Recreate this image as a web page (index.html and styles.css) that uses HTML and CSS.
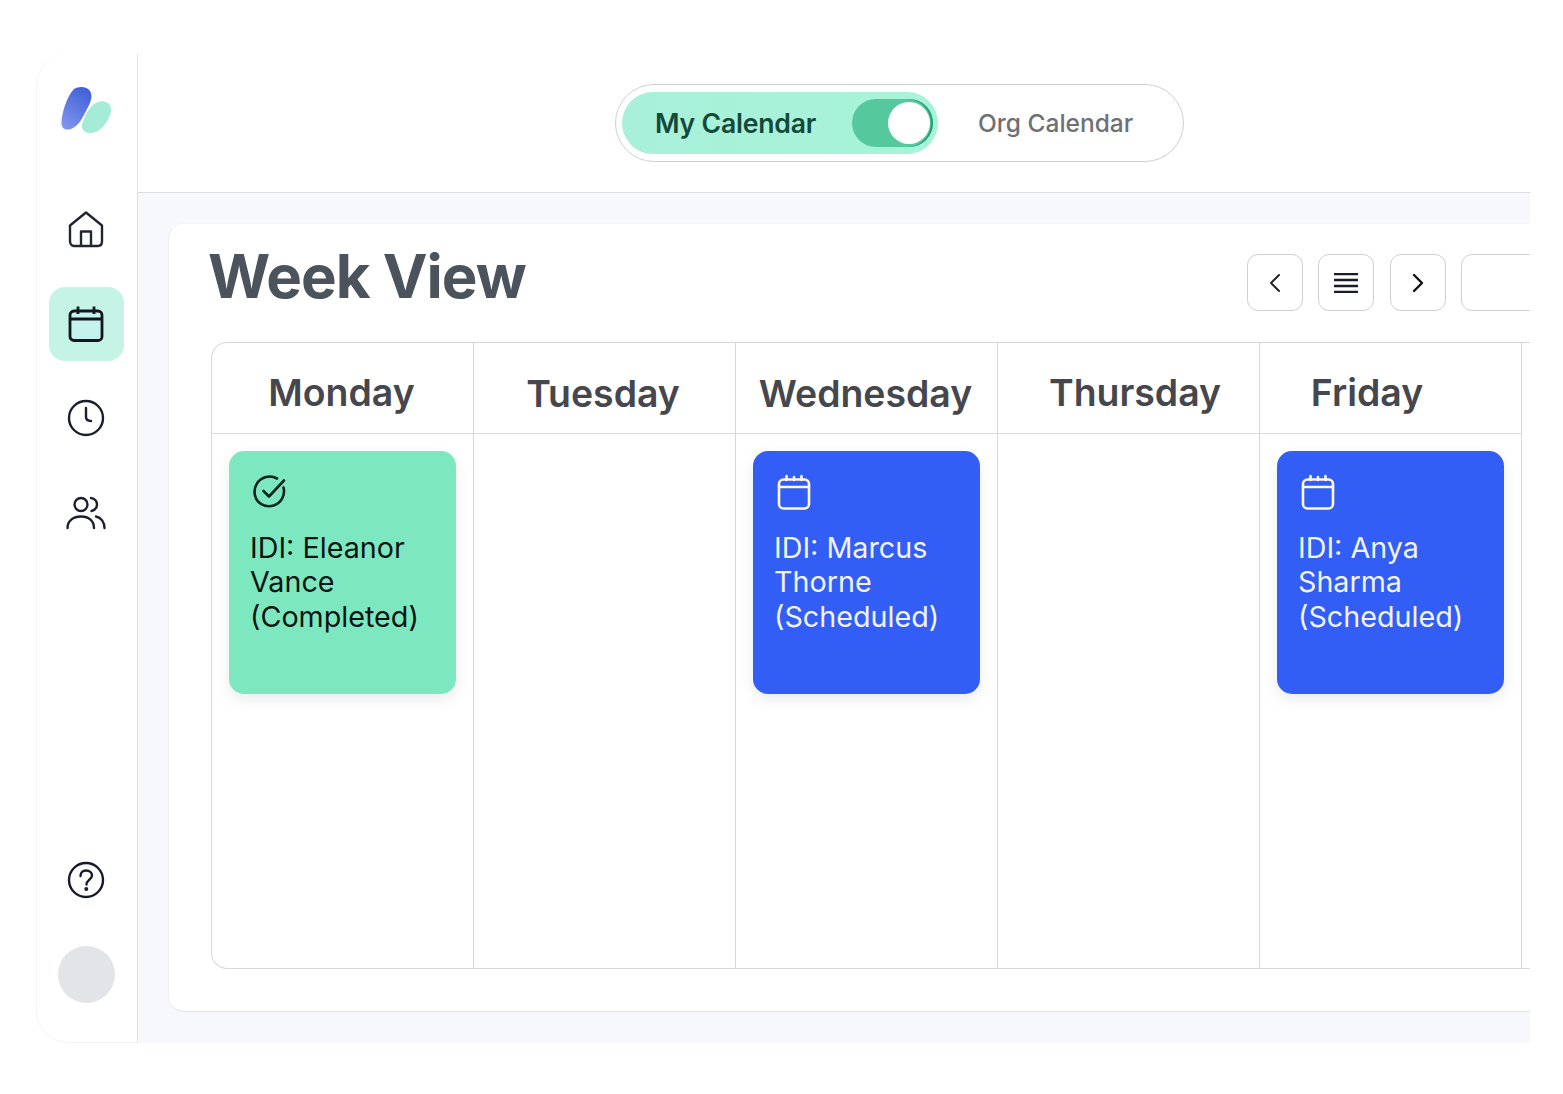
FILE: index.html
```html
<!DOCTYPE html>
<html>
<head>
    <link rel="stylesheet" href="styles.css">
</head>
<body>
<div class="app">
    <div class="sidebar">
        <svg class="logo" width="52" height="50" viewBox="0 0 52 50">
            <defs>
                <linearGradient id="logo-blue" x1="0.7" y1="0" x2="0.2" y2="1">
                    <stop offset="0" stop-color="#4360d8"/>
                    <stop offset="1" stop-color="#7f95ee"/>
                </linearGradient>
            </defs>
            <path d="M14 3C18 0 27 0 30 5C33 10 31 16 27 23C23 31 19 40 11 43C5 45 1 42 1.500 36C2 26 7 10 14 3Z" fill="url(#logo-blue)"/>
            <path d="M24 33C27 24 33 17 40 15.500C47 14 52 19 51 25C50 32 44 42 36 46C29 49 21 46 22 39Z" fill="#a4ecd6"/>
        </svg>
        <div class="nav-item nav-home">
            <svg width="38" height="38" viewBox="0 0 38 38" fill="none" stroke="#22242f" stroke-width="2.400" stroke-linejoin="round">
                <path d="M3 15.500L19 2.500L35 15.500V31C35 34 33.500 36 31 36H7C4.500 36 3 34 3 31Z"/>
                <path d="M14 36V21.500H24V36"/>
            </svg>
        </div>
        <div class="nav-item nav-active">
            <svg width="36" height="38" viewBox="0 0 36 38" fill="none" stroke="#14161f" stroke-width="2.800" stroke-linejoin="round">
                <rect x="2" y="6" width="32" height="29.500" rx="4" fill="#c3f3ec"/>
                <path d="M2 14H34M10 1.500V9M26 1.500V9"/>
            </svg>
        </div>
        <div class="nav-item nav-clock">
            <svg width="38" height="38" viewBox="0 0 38 38" fill="none" stroke="#1b1e2b" stroke-width="2.400" stroke-linecap="round">
                <circle cx="19" cy="19" r="17"/>
                <path d="M19 9V18C19 20.500 20.500 22 24 22"/>
            </svg>
        </div>
        <div class="nav-item nav-people">
            <svg width="40" height="34" viewBox="0 0 40 34" fill="none" stroke="#1d202c" stroke-width="2.400" stroke-linecap="round">
                <circle cx="15" cy="8.500" r="6.500"/>
                <path d="M1.500 32C1.500 25 7 20.500 15 20.500C23 20.500 28 25 28 32"/>
                <path d="M25 2C29 2.500 31 5.500 31 8.500C31 11.500 29 14 25.500 15"/>
                <path d="M30 20.500C35 21.500 38.500 26 38.500 32"/>
            </svg>
        </div>
        <div class="nav-spacer"></div>
        <div class="nav-item nav-help">
            <svg width="38" height="38" viewBox="0 0 38 38" fill="none" stroke="#15192b" stroke-width="2.400" stroke-linecap="round">
                <circle cx="19" cy="19" r="17"/>
                <path d="M13.500 15C13.500 11.500 16 9.500 19 9.500C22.500 9.500 25 11.500 25 14.500C25 18.500 19.500 19 19.500 23.500"/>
                <circle cx="19.300" cy="28" r="0.800" fill="#15192b"/>
            </svg>
        </div>
        <div class="avatar"></div>
    </div>
    <div class="content">
        <div class="topbar">
            <div class="switcher">
                <div class="switch-active">
                    <span>My Calendar</span>
                    <div class="toggle"><div class="knob"></div></div>
                </div>
                <span class="switch-other">Org Calendar</span>
            </div>
        </div>
        <div class="main-content">
            <div class="panel">
                <div class="panel-head">
                    <h1>Week View</h1>
                    <div class="tools">
                        <div class="tool">
                            <svg width="14" height="20" viewBox="0 0 14 20" fill="none" stroke="#22242c" stroke-width="2" stroke-linecap="round" stroke-linejoin="round"><path d="M11 2L3 10L11 18"/></svg>
                        </div>
                        <div class="tool">
                            <svg width="26" height="20" viewBox="0 0 26 20" fill="none" stroke="#1a1c2c" stroke-width="2.500"><path d="M1 1H25M1 7H25M1 13H25M1 19H25"/></svg>
                        </div>
                        <div class="tool">
                            <svg width="14" height="20" viewBox="0 0 14 20" fill="none" stroke="#111" stroke-width="2.400" stroke-linecap="round" stroke-linejoin="round"><path d="M3 2L11 10L3 18"/></svg>
                        </div>
                        <div class="tool tool-wide"></div>
                    </div>
                </div>
                <div class="week">
                    <div class="day">
                        <div class="day-name">Monday</div>
                        <div class="day-body">
                            <div class="event event-done">
                                <svg width="36" height="36" viewBox="0 0 36 36" fill="none" stroke="#10221d" stroke-width="2.600" stroke-linecap="round" stroke-linejoin="round">
                                    <path d="M31.500 13.500C33.500 21.500 29 29 21.500 31.500C13 34 5 29.500 3 21.500C1 13 6 5 14 3C18 2 21.500 2.500 25 4.500"/>
                                    <path d="M11.500 17L17 22.500L32 6.500"/>
                                </svg>
                                <p>IDI: Eleanor Vance (Completed)</p>
                            </div>
                        </div>
                    </div>
                    <div class="day">
                        <div class="day-name name-tue">Tuesday</div>
                        <div class="day-body"></div>
                    </div>
                    <div class="day">
                        <div class="day-name name-wed">Wednesday</div>
                        <div class="day-body">
                            <div class="event event-scheduled">
                                <svg width="36" height="36" viewBox="0 0 36 36" fill="none" stroke="#fdf6e0" stroke-width="2.600" stroke-linejoin="round" stroke-linecap="round">
                                    <rect x="3" y="5.500" width="30" height="29" rx="4.500"/>
                                    <path d="M3 13H33M10.500 2V6M18 3V6M25.500 2V6"/>
                                </svg>
                                <p>IDI: Marcus Thorne (Scheduled)</p>
                            </div>
                        </div>
                    </div>
                    <div class="day">
                        <div class="day-name name-thu">Thursday</div>
                        <div class="day-body"></div>
                    </div>
                    <div class="day">
                        <div class="day-name name-fri">Friday</div>
                        <div class="day-body">
                            <div class="event event-scheduled">
                                <svg width="36" height="36" viewBox="0 0 36 36" fill="none" stroke="#fdf6e0" stroke-width="2.600" stroke-linejoin="round" stroke-linecap="round">
                                    <rect x="3" y="5.500" width="30" height="29" rx="4.500"/>
                                    <path d="M3 13H33M10.500 2V6M18 3V6M25.500 2V6"/>
                                </svg>
                                <p>IDI: Anya Sharma (Scheduled)</p>
                            </div>
                        </div>
                    </div>
                    <div class="day"></div>
                </div>
            </div>
        </div>
    </div>
</div>
</body>
</html>
```

FILE: styles.css
```css
html, body {
    margin: 0;
    height: 100%;
    overflow: hidden;
}
body {
    background-color: #ffffff;
    font-family: Inter, "Liberation Sans", sans-serif;
    padding: 54px 33px 51px 36px;
    box-sizing: border-box;
}
.app {
    display: flex;
    height: 989px;
    overflow: hidden;
    background-color: #ffffff;
    border-radius: 32px 0 0 32px;
    box-shadow: inset 1px 0 0 #f6f6f8, inset 0 -1px 0 #f3f4f6;
}
.sidebar {
    width: 102px;
    flex-shrink: 0;
    border-right: 1px solid #dfe1e5;
    display: flex;
    flex-direction: column;
    align-items: center;
    padding-top: 31px;
    padding-bottom: 40px;
    padding-right: 1px;
    box-sizing: border-box;
    height: 989px;
}
.logo {
    margin-bottom: 74px;
    margin-top: 1px;
}
.nav-item {
    display: flex;
    align-items: center;
    justify-content: center;
    width: 75px;
    height: 74px;
    flex-shrink: 0;
}
.nav-home {
    height: 38px;
    margin-bottom: 39px;
}
.nav-active {
    background-color: #c5f3e5;
    border-radius: 16px;
    margin-bottom: 38px;
}
.nav-clock {
    height: 38px;
    margin-bottom: 59px;
}
.nav-people {
    height: 34px;
}
.nav-spacer {
    flex: 1;
}
.nav-help {
    height: 38px;
    margin-bottom: 47px;
}
.avatar {
    width: 57px;
    height: 57px;
    border-radius: 50%;
    background-color: #e2e4e8;
    flex-shrink: 0;
}
.content {
    flex: 1;
    min-width: 0;
    display: flex;
    flex-direction: column;
}
.topbar {
    height: 138px;
    flex-shrink: 0;
    border-bottom: 1px solid #dcdee1;
    display: flex;
    align-items: center;
    justify-content: center;
    padding-left: 133px;
}
.switcher {
    display: flex;
    align-items: center;
    width: 569px;
    height: 78px;
    box-sizing: border-box;
    border: 1px solid #cfcfd2;
    border-radius: 39px;
    padding: 0 6px;
    margin-left: -2px;
}
.switch-active {
    display: flex;
    align-items: center;
    justify-content: space-between;
    width: 316px;
    height: 62px;
    box-sizing: border-box;
    padding: 0 5px 0 33px;
    border-radius: 31px;
    background: linear-gradient(90deg, #a9f0da, #a6f4d8);
    font-size: 26.600px;
    font-weight: 600;
    color: #14493a;
    letter-spacing: -0.2px;
}
.toggle {
    display: flex;
    align-items: center;
    justify-content: flex-end;
    width: 81px;
    height: 48px;
    padding-right: 3px;
    box-sizing: border-box;
    border-radius: 24px;
    background-color: #56c89d;
    box-shadow: inset -2px 0 0 #2b9a78;
}
.knob {
    width: 42px;
    height: 42px;
    border-radius: 50%;
    background-color: #ffffff;
}
.switch-other {
    margin-left: 40px;
    font-size: 24.500px;
    font-weight: 500;
    color: #6e7075;
    white-space: nowrap;
}
.main-content {
    flex: 1;
    min-height: 0;
    background-color: #f6f8fc;
    padding: 30px 0 31px 30px;
}
.panel {
    height: 100%;
    box-sizing: border-box;
    width: 1500px;
    background-color: #ffffff;
    border: 1px solid #e4e5e9;
    border-top-color: #f3f4f7;
    border-left-color: #edeef1;
    border-radius: 16px;
    padding: 0 0 42px 42px;
    display: flex;
    flex-direction: column;
}
.panel-head {
    display: flex;
    justify-content: space-between;
    height: 118px;
    flex-shrink: 0;
    padding-right: 106px;
}
.panel-head h1 {
    margin: 15px 0 0 -3px;
    font-size: 60px;
    line-height: 74px;
    font-weight: 700;
    color: #4b535d;
    letter-spacing: -1px;
}
.tools {
    display: flex;
    gap: 15.300px;
    margin-top: 30px;
    flex-shrink: 0;
}
.tool {
    display: flex;
    align-items: center;
    justify-content: center;
    width: 56px;
    height: 57px;
    flex-shrink: 0;
    box-sizing: border-box;
    border: 1px solid #cfd0d4;
    border-radius: 11px;
    background-color: #ffffff;
}
.tool-wide {
    width: 100px;
}
.week {
    flex: 1;
    min-height: 0;
    display: grid;
    grid-template-columns: repeat(6, 262px);
    border: 1px solid #d6d7da;
    border-right: none;
    border-radius: 16px 0 0 16px;
}
.day {
    display: flex;
    flex-direction: column;
    border-right: 1px solid #d6d7da;
}
.day-name {
    height: 91px;
    flex-shrink: 0;
    box-sizing: border-box;
    border-bottom: 1px solid #dcdde0;
    display: flex;
    align-items: center;
    justify-content: center;
    font-size: 37.400px;
    font-weight: 600;
    color: #45474d;
    padding-top: 8px;
    padding-right: 2px;
}
.name-tue {
    padding-top: 10px;
    padding-right: 3px;
}
.name-wed {
    padding-top: 10px;
}
.name-thu {
    padding-right: 0;
    padding-left: 13px;
}
.name-fri {
    padding-right: 47px;
}
.day-body {
    flex: 1;
    padding: 17px 17px 0;
}
.event {
    box-sizing: border-box;
    width: 227px;
    height: 243px;
    padding: 23px 21px 0;
    border-radius: 15px;
    box-shadow: 0 6px 14px rgba(60, 70, 90, 0.1);
}
.event svg {
    display: block;
    margin-bottom: 20.800px;
    margin-left: 2px;
}
.event p {
    margin: 0;
    font-size: 28.700px;
    line-height: 34.500px;
}
.event-done {
    background-color: #7de8c0;
    color: #0b1512;
}
.event-scheduled {
    background-color: #325ef5;
    color: #f2f3f8;
}
```
